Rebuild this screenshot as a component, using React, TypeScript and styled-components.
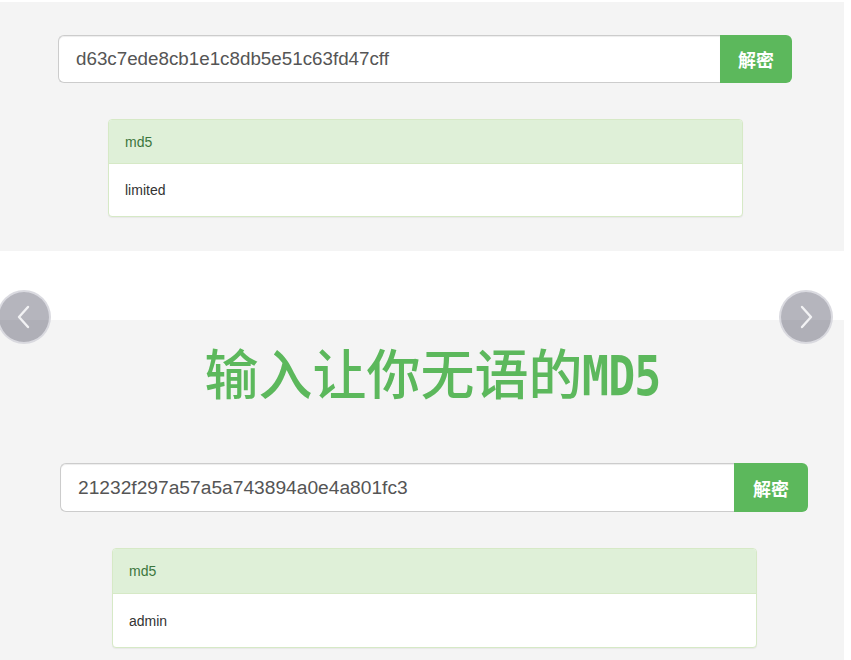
import React from "react";
import styled, { createGlobalStyle } from "styled-components";

const Global = createGlobalStyle`
  html, body { margin: 0; padding: 0; background: #fff; }
  body { font-family: "Liberation Sans", Arial, "Noto Sans CJK SC", sans-serif; }
`;

const Page = styled.div`
  position: relative;
  width: 851px;
  height: 660px;
  overflow: hidden;
  background: #fff;
`;

const Slide = styled.section<{ $top: number; $height: number }>`
  width: 844px;
  margin-top: ${(p) => p.$top}px;
  height: ${(p) => p.$height}px;
  background: #f4f4f4;
  display: flex;
  flex-direction: column;
  box-sizing: border-box;
`;

const Title = styled.h1`
  margin: 22px 0 0 0;
  padding-left: 22px;
  height: 60px;
  line-height: 60px;
  text-align: center;
  color: #5cb85c;
  font-family: "Noto Sans CJK SC", sans-serif;
  font-size: 54px;
  font-weight: 500;
  white-space: nowrap;
`;

const Latin = styled.span`
  display: inline-block;
  font-family: "DejaVu Sans Mono", "Liberation Mono", monospace;
  font-weight: 700;
  font-size: 56px;
  letter-spacing: -1px;
  transform: scaleX(0.8);
  transform-origin: left center;
  margin-right: -19px;
`;

const InputGroup = styled.div<{ $left: number; $top: number; $h: number }>`
  display: flex;
  margin-left: ${(p) => p.$left}px;
  margin-top: ${(p) => p.$top}px;
  height: ${(p) => p.$h}px;
`;

const HashInput = styled.div<{ $w: number; $fs: number }>`
  width: ${(p) => p.$w}px;
  box-sizing: border-box;
  background: #fff;
  border: 1px solid #ccc;
  border-right: none;
  border-radius: 6px 0 0 6px;
  box-shadow: inset 0 1px 1px rgba(0, 0, 0, 0.075);
  display: flex;
  align-items: center;
  padding-left: 17px;
  font-size: ${(p) => p.$fs}px;
  color: #555;
`;

const DecryptButton = styled.button<{ $w: number }>`
  width: ${(p) => p.$w}px;
  border: none;
  background: #5cb85c;
  color: #fff;
  border-radius: 0 6px 6px 0;
  font-family: "Noto Sans CJK SC", sans-serif;
  font-weight: 700;
  font-size: 18px;
  padding: 0;
  display: flex;
  align-items: center;
  justify-content: center;
`;

const Card = styled.div<{ $left: number; $top: number; $w: number }>`
  margin-left: ${(p) => p.$left}px;
  margin-top: ${(p) => p.$top}px;
  width: ${(p) => p.$w}px;
  border: 1px solid #d6e9c6;
  border-radius: 4px;
  background: #fff;
  box-shadow: 0 1px 1px rgba(0, 0, 0, 0.05);
  overflow: hidden;
`;

const CardHeader = styled.div<{ $h: number }>`
  height: ${(p) => p.$h}px;
  background: #dff0d8;
  border-bottom: 1px solid #d6e9c6;
  color: #3c763d;
  font-size: 14px;
  display: flex;
  align-items: center;
  padding-left: 16px;
  box-sizing: border-box;
`;

const CardBody = styled.div<{ $h: number }>`
  height: ${(p) => p.$h}px;
  color: #333;
  font-size: 14px;
  display: flex;
  align-items: center;
  padding-left: 16px;
`;

const Arrow = styled.div<{ $side: "left" | "right" }>`
  position: absolute;
  top: 290px;
  ${(p) => (p.$side === "left" ? "left: -3px;" : "left: 779px;")}
  width: 50px;
  height: 50px;
  border-radius: 50%;
  border: 2px solid rgba(225, 225, 230, 0.85);
  background: rgba(90, 92, 108, 0.45);
  display: flex;
  align-items: center;
  justify-content: center;
`;

type BlockProps = {
  hash: string;
  result: string;
  left: number;
  top: number;
  h: number;
  inputW: number;
  btnW: number;
  fs: number;
  cardLeft: number;
  cardTop: number;
  cardW: number;
  headH: number;
  bodyH: number;
};

function DecryptBlock(p: BlockProps) {
  return (
    <>
      <InputGroup $left={p.left} $top={p.top} $h={p.h}>
        <HashInput $w={p.inputW} $fs={p.fs}>{p.hash}</HashInput>
        <DecryptButton $w={p.btnW}>解密</DecryptButton>
      </InputGroup>
      <Card $left={p.cardLeft} $top={p.cardTop} $w={p.cardW}>
        <CardHeader $h={p.headH}>md5</CardHeader>
        <CardBody $h={p.bodyH}>{p.result}</CardBody>
      </Card>
    </>
  );
}

function Chevron({ dir }: { dir: "left" | "right" }) {
  return (
    <svg width="18" height="26" viewBox="0 0 18 26">
      <path
        d={dir === "left" ? "M13 3 L4 13 L13 23" : "M5 3 L14 13 L5 23"}
        fill="none"
        stroke="#f2f2f4"
        strokeWidth="2.4"
        strokeLinecap="round"
        strokeLinejoin="round"
      />
    </svg>
  );
}

export default function App() {
  return (
    <>
      <Global />
      <Page>
        <Slide $top={2} $height={249}>
          <DecryptBlock
            hash="d63c7ede8cb1e1c8db5e51c63fd47cff"
            result="limited"
            left={58}
            top={33}
            h={48}
            inputW={662}
            btnW={72}
            fs={18.8}
            cardLeft={108}
            cardTop={36}
            cardW={633}
            headH={44}
            bodyH={52}
          />
        </Slide>
        <Slide $top={69} $height={340}>
          <Title>
            输入让你无语的<Latin>MD5</Latin>
          </Title>
          <DecryptBlock
            hash="21232f297a57a5a743894a0e4a801fc3"
            result="admin"
            left={60}
            top={61}
            h={49}
            inputW={674}
            btnW={74}
            fs={19.2}
            cardLeft={112}
            cardTop={36}
            cardW={643}
            headH={45}
            bodyH={53}
          />
        </Slide>
        <Arrow $side="left">
          <Chevron dir="left" />
        </Arrow>
        <Arrow $side="right">
          <Chevron dir="right" />
        </Arrow>
      </Page>
    </>
  );
}
